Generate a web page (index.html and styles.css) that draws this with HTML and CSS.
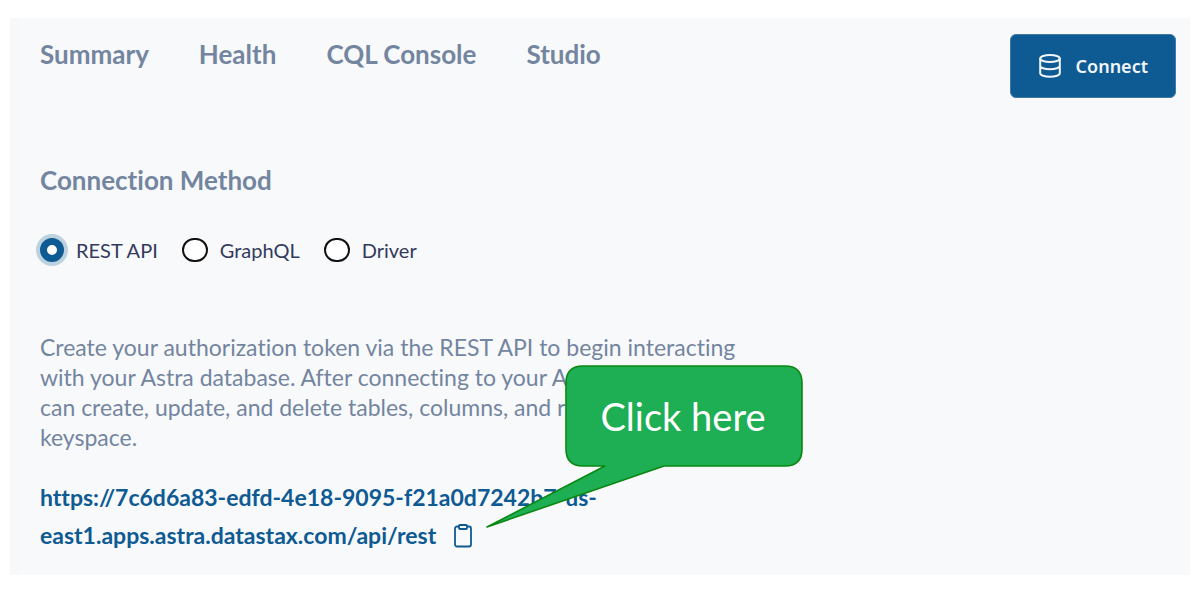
FILE: index.html
```html
<!DOCTYPE html>
<html lang="en">
<head>
<meta charset="utf-8">
<meta name="viewport" content="width=device-width, initial-scale=1">
<title>Connection Method</title>
<link rel="stylesheet" href="styles.css">
</head>
<body>
<main class="panel">
  <header class="topbar">
    <nav class="tabs">
      <a href="#summary">Summary</a>
      <a href="#health">Health</a>
      <a href="#console">CQL Console</a>
      <a href="#studio">Studio</a>
    </nav>
    <button class="connect" type="button">
      <svg width="22" height="24" viewBox="0 0 22 24" fill="none" stroke="currentColor" stroke-width="2" aria-hidden="true">
        <ellipse cx="11" cy="4.500" rx="9.800" ry="3.500"/>
        <path d="M1.200 4.500v14.800c0 2 4.400 3.500 9.800 3.500s9.800-1.500 9.800-3.500V4.500M1.200 11.800c0 2 4.400 3.500 9.800 3.500s9.800-1.500 9.800-3.500"/>
      </svg>
      <span>Connect</span>
    </button>
  </header>

  <form class="methods">
    <fieldset>
      <legend>Connection Method</legend>
      <div class="options">
        <label><input type="radio" name="method" checked>REST API</label>
        <label><input type="radio" name="method">GraphQL</label>
        <label><input type="radio" name="method">Driver</label>
      </div>
    </fieldset>
  </form>

  <p class="intro">Create your authorization token via the REST API to begin interacting<br>with your Astra database. After connecting to your Astra DB, you<br>can create, update, and delete tables, columns, and rows in a<br>keyspace.</p>

  <div class="endpoint">
    <a href="#rest">https://7c6d6a83-edfd-4e18-9095-f21a0d7242b7-us-<br>east1.apps.astra.datastax.com/api/rest</a>
    <button class="copy" type="button" aria-label="Copy">
      <svg width="18" height="24" viewBox="0 0 18 24" fill="none" stroke="currentColor" stroke-width="1.800" aria-hidden="true">
        <rect x="1" y="2.500" width="16" height="20" rx="2"/>
        <rect x="5" y="1" width="8" height="4" rx="1" fill="#f8f9fb"/>
      </svg>
    </button>
    <div class="callout">
      <svg viewBox="0 0 318 164" aria-hidden="true">
        <path d="M97 1H299Q316 1 316 18V84Q316 101 299 101H178L1 162L119 101H97Q80 101 80 84V18Q80 1 97 1Z" fill="#1eae54" stroke="#0c8712" stroke-width="1.600" stroke-linejoin="round"/>
      </svg>
      <span>Click here</span>
    </div>
  </div>
</main>
</body>
</html>
```
FILE: styles.css
```css
* { box-sizing: border-box; }

body {
  margin: 0;
  padding: 18px 10px 23px;
  background: #fff;
  color: #73859f;
  font-family: Lato, sans-serif;
  font-variant-ligatures: none;
}

.panel {
  padding: 16px 14px 21px 20px;
  border-left: 10px solid #f6f8fa;
  background: #f8f9fb;
}

.topbar {
  display: flex;
  justify-content: space-between;
  align-items: flex-start;
}

.tabs {
  display: flex;
  flex-wrap: wrap;
  gap: 50px;
  padding-top: 4px;
}

.tabs a {
  color: inherit;
  font-size: 26px;
  font-weight: 700;
  line-height: 32px;
  text-decoration: none;
}

.connect {
  display: flex;
  align-items: center;
  gap: 15px;
  height: 64px;
  padding: 0 27px 0 28px;
  border: 1px solid #3f79a5;
  border-radius: 6px;
  background: #0e5a92;
  color: #f1f6fa;
  font: 600 18px/24px "Noto Sans", sans-serif;
}

fieldset {
  margin: 0;
  padding: 0;
  border: 0;
}

.methods { margin-top: 66px; }

legend {
  padding: 0;
  font-size: 26px;
  font-weight: 700;
  line-height: 32px;
}

.options {
  display: flex;
  flex-wrap: wrap;
  gap: 24px;
  margin-top: 40px;
}

.options label {
  display: flex;
  align-items: center;
  gap: 12px;
  color: #333b5c;
  font-size: 20px;
  line-height: 28px;
}

.options input {
  appearance: none;
  width: 26px;
  height: 24px;
  margin: 0;
  border: 2px solid #111;
  border-radius: 12px;
  background: #fff;
}

.options input:checked {
  width: 24px;
  border: 7px solid #0e5a92;
  box-shadow: 0 0 0 4px #bdd2df;
}

.intro {
  margin: 68px 0 0;
  font-size: 23px;
  line-height: 30px;
}

.endpoint {
  position: relative;
  width: fit-content;
  margin-top: 26px;
  color: #0e5a92;
  font-size: 23px;
  font-weight: 700;
  line-height: 38px;
}

.endpoint a {
  color: inherit;
  text-decoration: none;
}

.copy {
  margin-left: 12px;
  padding: 0;
  border: 0;
  background: none;
  color: inherit;
  vertical-align: -4px;
}

.copy svg { display: block; }

.callout {
  position: absolute;
  left: 446px;
  bottom: 25px;
  width: 318px;
  height: 164px;
}

.callout svg {
  display: block;
  width: 100%;
}

.callout span {
  position: absolute;
  top: 0;
  right: 2px;
  width: 238px;
  color: #fff;
  font: 400 38px/102px Lato, sans-serif;
  text-align: center;
}
```
